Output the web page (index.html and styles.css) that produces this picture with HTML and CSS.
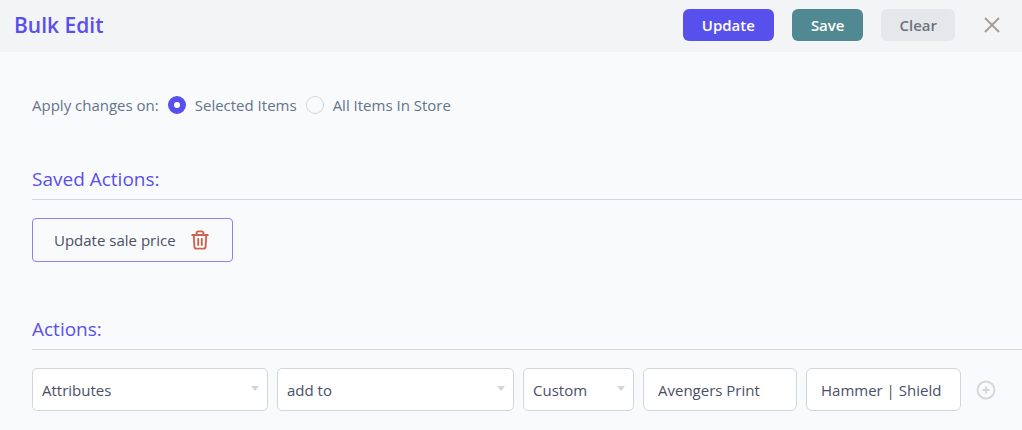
FILE: index.html
```html
<!DOCTYPE html>
<html lang="en">
<head>
<meta charset="utf-8">
<meta name="viewport" content="width=device-width, initial-scale=1">
<title>Bulk Edit</title>
<link rel="stylesheet" href="styles.css">
</head>
<body>
<header class="header">
  <h1 class="header-title">Bulk Edit</h1>
  <div class="header-actions">
    <button class="btn btn-primary" type="button">Update</button>
    <button class="btn btn-save" type="button">Save</button>
    <button class="btn btn-clear" type="button">Clear</button>
    <button class="close" type="button" aria-label="Close">
      <svg width="16" height="16" viewBox="0 0 16 16" fill="none" stroke="currentColor" stroke-width="2"><path d="M1 1l14 14M15 1L1 15"/></svg>
    </button>
  </div>
</header>
<main class="content">
  <div class="scope" role="radiogroup" aria-labelledby="scope-label">
    <span id="scope-label" class="scope-label">Apply changes on:</span>
    <label class="option"><input class="radio" type="radio" name="scope" checked>Selected Items</label>
    <label class="option"><input class="radio" type="radio" name="scope">All Items In Store</label>
  </div>
  <section class="section">
    <h2 class="section-title">Saved Actions:</h2>
    <div class="saved">
      <button class="saved-name" type="button">Update sale price</button>
      <button class="delete" type="button" aria-label="Delete Update sale price">
        <svg width="18" height="20" viewBox="0 0 18 20" fill="none" stroke="currentColor" stroke-width="1.9" stroke-linecap="round" stroke-linejoin="round"><path d="M1.2 5h15.6M5.6 4.8V3q0-1.6 1.6-1.6h3.6q1.6 0 1.6 1.6v1.8M2.7 5l.7 11.6q.1 2 2.1 2h7q2 0 2.1-2L15.3 5M7.2 9v6M10.8 9v6"/></svg>
      </button>
    </div>
  </section>
  <section class="section">
    <h2 class="section-title">Actions:</h2>
    <div class="action-row">
      <div class="select"><select class="field" aria-label="Field"><option>Attributes</option></select></div>
      <div class="select"><select class="field" aria-label="Operation"><option>add to</option></select></div>
      <div class="select"><select class="field" aria-label="Attribute type"><option>Custom</option></select></div>
      <input class="field text-field" type="text" aria-label="Attribute name" value="Avengers Print">
      <input class="field text-field" type="text" aria-label="Attribute values" value="Hammer | Shield">
      <button class="add" type="button" aria-label="Add action">
        <svg width="20" height="20" viewBox="0 0 20 20" fill="none" stroke="currentColor" stroke-width="1.8"><circle cx="10" cy="10" r="8.5"/><path d="M10 6.5v7M6.5 10h7"/></svg>
      </button>
    </div>
  </section>
</main>
</body>
</html>
```
FILE: styles.css
```css
* { box-sizing: border-box; }

body {
  margin: 0;
  background: #f9fafc;
  color: #64748b;
  font: 15px/20px "Segoe UI", "Open Sans", "Noto Sans", sans-serif;
}

button, input, select { font: inherit; color: inherit; }

button {
  padding: 0;
  border: 0;
  background: none;
  cursor: pointer;
}

svg { display: block; }

.header {
  display: flex;
  align-items: center;
  justify-content: space-between;
  height: 52px;
  padding: 0 22px 2px 14px;
  background: #f3f4f6;
}

.header-title {
  margin: 0;
  color: #5850ec;
  font-size: 21px;
  line-height: 32px;
  font-weight: 600;
}

.header-actions {
  display: flex;
  align-items: center;
  gap: 18px;
}

.btn {
  height: 32px;
  padding: 0 19px;
  border-radius: 6px;
  font-weight: 600;
}

.btn-primary { background: #5850ec; color: #fff; }
.btn-save { background: #508991; color: #fff; }
.btn-clear { padding: 0 18px; background: #e5e7eb; color: #6b7280; }

.close {
  margin-left: 11px;
  color: #ab9c9a;
}

.content { padding: 43px 0 19px 32px; }

.scope {
  display: flex;
  align-items: center;
  gap: 9px;
}

.option {
  display: flex;
  align-items: center;
  gap: 9px;
}

.radio {
  appearance: none;
  width: 18px;
  height: 18px;
  margin: 0;
  border: 1px solid #d2d6dc;
  border-radius: 50%;
  background: #f9fafb;
}

.radio:checked {
  border: 6px solid #5850ec;
  background: #fff;
}

.section { margin-top: 50px; }

.section + .section { margin-top: 53px; }

.section-title {
  margin: 0 0 18px;
  padding-bottom: 6px;
  border-bottom: 1px solid #d2d6dc;
  color: #5850ec;
  font-size: 19px;
  line-height: 28px;
  font-weight: 400;
}

.saved {
  display: inline-flex;
  align-items: center;
  gap: 15px;
  height: 44px;
  padding: 0 23px 0 21px;
  border: 1px solid #8d80f0;
  border-radius: 4px;
  color: #4b5066;
}

.delete { color: #cf6350; }

.action-row {
  display: grid;
  grid-template-columns: 236fr 237fr 111fr 154fr 155fr 26px;
  align-items: center;
  gap: 9px;
  padding-right: 26px;
}

.field {
  width: 100%;
  min-width: 0;
  height: 43px;
  padding: 0 9px;
  border: 1px solid #d2d6dc;
  border-radius: 5px;
  background: #fff;
  color: #4b5066;
}

.text-field {
  padding: 0 14px;
  border-radius: 6px;
}

.select { position: relative; }

.select .field { appearance: none; }

.select::after {
  content: "";
  position: absolute;
  top: 18px;
  right: 9px;
  border: 4px solid transparent;
  border-top: 5px solid #d2d6dc;
  border-bottom: 0;
  pointer-events: none;
}

.add {
  justify-self: end;
  color: #d2d6dc;
}
```
